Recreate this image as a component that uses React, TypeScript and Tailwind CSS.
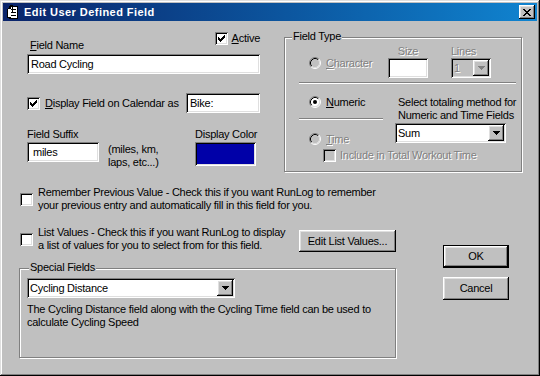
import React from "react";

const sunken =
  "shadow-[inset_1px_1px_0_#808080,inset_-1px_-1px_0_#ffffff,inset_2px_2px_0_#000000,inset_-2px_-2px_0_#dfdfdf]";
const raised =
  "bg-[#c0c0c0] shadow-[inset_-1px_-1px_0_#000000,inset_1px_1px_0_#ffffff,inset_-2px_-2px_0_#808080,inset_2px_2px_0_#dfdfdf]";
const dim = "text-[#808080] [text-shadow:1px_1px_0_#ffffff]";

function Check({ checked = false, disabled = false }: { checked?: boolean; disabled?: boolean }) {
  return (
    <span
      className={`relative block w-[13px] h-[13px] shrink-0 ${disabled ? "bg-[#c0c0c0]" : "bg-white"} ${sunken}`}
    >
      {checked && (
        <svg className="absolute left-[3px] top-[3px]" width="7" height="7" viewBox="0 0 7 7" shapeRendering="crispEdges">
          <path
            fill="#000"
            d="M6 0h1v1h-1zM5 1h2v1h-2zM0 2h1v1h-1zM4 2h3v1h-3zM0 3h2v1h-2zM3 3h3v1h-3zM0 4h5v1h-5zM1 5h3v1h-3zM2 6h1v1h-1z"
          />
        </svg>
      )}
    </span>
  );
}

function Radio({ on = false, disabled = false }: { on?: boolean; disabled?: boolean }) {
  return (
    <svg width="12" height="12" viewBox="0 0 12 12" className="shrink-0 block">
      <circle cx="6" cy="6" r="4.5" fill={disabled ? "#c0c0c0" : "#ffffff"} />
      <path d="M2.11 9.89A5.5 5.5 0 0 1 9.89 2.11" stroke="#808080" fill="none" />
      <path d="M9.89 2.11A5.5 5.5 0 0 1 2.11 9.89" stroke="#ffffff" fill="none" />
      <path d="M2.82 9.18A4.5 4.5 0 0 1 9.18 2.82" stroke="#000000" fill="none" />
      <path d="M9.18 2.82A4.5 4.5 0 0 1 2.82 9.18" stroke="#dfdfdf" fill="none" />
      {on && <circle cx="6" cy="6" r="2" fill="#000" />}
    </svg>
  );
}

function Arrow({ disabled = false }: { disabled?: boolean }) {
  return (
    <svg width="7" height="4" viewBox="0 0 7 4" shapeRendering="crispEdges">
      <path fill={disabled ? "#808080" : "#000"} d="M0 0h7v1h-7zM1 1h5v1h-5zM2 2h3v1h-3zM3 3h1v1h-1z" />
    </svg>
  );
}

function Combo({ className, text, disabled = false }: { className: string; text: string; disabled?: boolean }) {
  return (
    <div className={`flex p-[2px] ${disabled ? "bg-[#c0c0c0]" : "bg-white"} ${sunken} ${className}`}>
      <div className={`flex-1 pl-[1px] leading-[16px] ${disabled ? dim : ""}`}>{text}</div>
      <div className={`w-[16px] flex items-center justify-center ${raised}`}>
        <Arrow disabled={disabled} />
      </div>
    </div>
  );
}

function Group({ label, labelPos, className, children }: { label: string; labelPos: string; className: string; children: React.ReactNode }) {
  return (
    <div className={`relative border border-[#808080] shadow-[inset_1px_1px_0_#ffffff,1px_1px_0_#ffffff] ${className}`}>
      <span className={`absolute -top-[8px] ${labelPos} bg-[#c0c0c0] px-[1px] leading-[13px]`}>{label}</span>
      {children}
    </div>
  );
}

function Etched({ className }: { className: string }) {
  return <div className={`h-[2px] border-t border-b border-t-[#808080] border-b-white ${className}`} />;
}

export default function App() {
  return (
    <div
      className="w-[540px] h-[376px] p-[3px] bg-[#c0c0c0] text-[11px] leading-[13px] tracking-[-0.25px] whitespace-nowrap text-black shadow-[inset_-1px_-1px_0_#000000,inset_1px_1px_0_#dfdfdf,inset_-2px_-2px_0_#808080,inset_2px_2px_0_#ffffff] overflow-hidden"
      style={{ fontFamily: '"Liberation Sans", Arial, sans-serif' }}
    >
      {/* title bar */}
      <div className="h-[18px] flex items-center bg-gradient-to-r from-[#0a246a] to-[#1084d0]">
        <svg className="ml-[2px]" width="16" height="16" viewBox="0 0 16 16" shapeRendering="crispEdges">
          <path fill="#fff" stroke="#000" d="M4.5 2.5h8v12h-8z" />
          <path fill="#000" d="M6 5h5v1h-5zM6 8h5v1h-5zM6 11h5v1h-5z" />
          <path fill="none" stroke="#000" d="M2.5 4.5v9h3M2.5 4.5h3v-3h2v6" />
          <path fill="#fff" d="M3 5h2v8h-2z" />
        </svg>
        <span className="ml-[3px] font-bold text-white tracking-[0.45px]">Edit User Defined Field</span>
        <div className={`ml-auto mr-[2px] w-[16px] h-[14px] flex items-center justify-center ${raised}`}>
          <svg width="8" height="7" viewBox="0 0 8 7" shapeRendering="crispEdges">
            <path
              fill="#000"
              d="M0 0h2v1h-2zM6 0h2v1h-2zM1 1h2v1h-2zM5 1h2v1h-2zM2 2h4v1h-4zM3 3h2v1h-2zM2 4h4v1h-4zM1 5h2v1h-2zM5 5h2v1h-2zM0 6h2v1h-2zM6 6h2v1h-2z"
            />
          </svg>
        </div>
      </div>

      {/* top section */}
      <div className="flex items-start h-[151px]">
        <div className="ml-[24px] mt-[11px] w-[233px] flex flex-col">
          <div className="flex justify-between h-[22px]">
            <span className="self-end mb-[2px] pl-[3px]">
              <u>F</u>ield Name
            </span>
            <div className="self-start flex items-center gap-[4px]">
              <Check checked />
              <span>
                <u>A</u>ctive
              </span>
            </div>
          </div>
          <div className={`h-[20px] w-full bg-white pl-[4px] leading-[20px] ${sunken}`}>Road Cycling</div>

          <div className="mt-[19px] flex items-center h-[20px]">
            <Check checked />
            <span className="ml-[5px]">
              <u>D</u>isplay Field on Calendar as
            </span>
            <div className={`ml-auto w-[74px] h-[20px] bg-white pl-[4px] leading-[20px] ${sunken}`}>Bike:</div>
          </div>

          <div className="mt-[15px] flex items-start">
            <div className="w-[72px] flex flex-col">
              <span>Field Suffix</span>
              <div className={`mt-[1px] h-[20px] bg-white pl-[6px] leading-[20px] ${sunken}`}>miles</div>
            </div>
            <div className="ml-[9px] w-[87px] mt-[15px]">
              (miles, km,
              <br />
              laps, etc...)
            </div>
            <div className="w-[61px] flex flex-col">
              <span>Display Color</span>
              <div className={`mt-[1px] h-[24px] p-[2px] bg-white ${sunken}`}>
                <div className="w-full h-full bg-[#0000a8]" />
              </div>
            </div>
          </div>
        </div>

        <Group label="Field Type" labelPos="left-[7px]" className="ml-[24px] mt-[16px] w-[238px] h-[135px]">
          <div className="flex items-start pt-[7px]">
            <div className="w-[103px] pl-[24px] pt-[12px] flex items-center gap-[5px] h-[24px]">
              <Radio disabled />
              <span className={dim}>
                <u>C</u>haracter
              </span>
            </div>
            <div className="w-[40px] flex flex-col items-center">
              <span className={dim}>Size</span>
              <div className={`w-[40px] h-[20px] bg-white ${sunken}`} />
            </div>
            <div className="ml-[23px] flex flex-col">
              <span className={dim}>Lines</span>
              <Combo className="w-[40px] h-[20px]" text="1" disabled />
            </div>
          </div>
          <Etched className="mt-[4px] ml-[14px] w-[217px]" />

          <div className="flex items-start">
            <div className="ml-[14px] w-[84px] flex flex-col">
              <div className="mt-[12px] pl-[10px] flex items-center gap-[5px] h-[12px]">
                <Radio on />
                <span>
                  <u>N</u>umeric
                </span>
              </div>
              <Etched className="mt-[10px] w-full" />
              <div className="mt-[13px] pl-[10px] flex items-center gap-[5px] h-[12px]">
                <Radio disabled />
                <span className={dim}>
                  <u>T</u>ime
                </span>
              </div>
              <div className="mt-[4px] pl-[24px] flex items-center gap-[4px] h-[13px]">
                <Check disabled />
                <span className={dim}>Include in Total Workout Time</span>
              </div>
            </div>
            <div className="ml-[12px] flex flex-col">
              <div className="mt-[12px] pl-[3px]">
                Select totaling method for
                <br />
                Numeric and Time Fields
              </div>
              <Combo className="mt-[1px] w-[111px] h-[20px]" text="Sum" />
            </div>
          </div>
        </Group>
      </div>

      {/* lower section */}
      <div className="flex items-start">
        <div className="ml-[16px] w-[377px] flex flex-col">
          <div className="mt-[14px] pl-[1px] flex items-start">
            <div className="mt-[7px]">
              <Check />
            </div>
            <span className="ml-[5px]">
              Remember Previous Value - Check this if you want RunLog to remember
              <br />
              your previous entry and automatically fill in this field for you.
            </span>
          </div>
          <div className="mt-[14px] pl-[1px] flex items-start">
            <div className="mt-[7px]">
              <Check />
            </div>
            <span className="ml-[5px]">
              List Values - Check this if you want RunLog to display
              <br />
              a list of values for you to select from for this field.
            </span>
            <div className={`ml-auto mt-[4px] w-[97px] h-[22px] flex items-center justify-center ${raised}`}>
              Edit List Values...
            </div>
          </div>
          <Group label="Special Fields" labelPos="left-[9px]" className="mt-[16px] w-full h-[90px]">
            <Combo className="ml-[7px] mt-[9px] w-[208px] h-[20px]" text="Cycling Distance" />
            <div className="ml-[7px] mt-[5px]">
              The Cycling Distance field along with the Cycling Time field can be used to
              <br />
              calculate Cycling Speed
            </div>
          </Group>
        </div>

        <div className="ml-[47px] mt-[73px] flex flex-col">
          <div className="w-[66px] h-[23px] border border-black">
            <div className={`w-full h-full flex items-center justify-center ${raised}`}>OK</div>
          </div>
          <div className={`mt-[9px] w-[66px] h-[23px] flex items-center justify-center ${raised}`}>Cancel</div>
        </div>
      </div>
    </div>
  );
}
